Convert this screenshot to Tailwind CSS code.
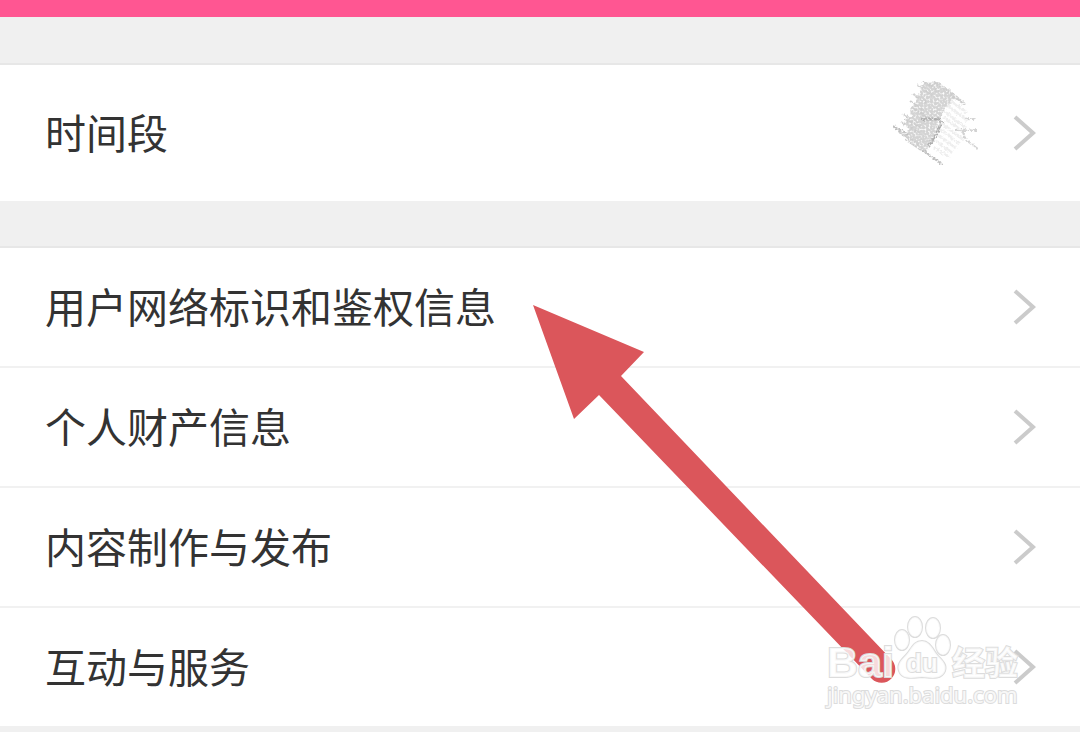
<!DOCTYPE html>
<html lang="zh-CN">
<head>
  <meta charset="UTF-8">
  <meta name="viewport" content="width=device-width, initial-scale=1.0">
  <title>个人信息收集清单</title>
  <script src="https://cdn.jsdelivr.net/npm/@tailwindcss/browser@4"></script>
</head>
<body class="min-h-screen bg-[#f0f0f0] font-['Noto_Sans_CJK_SC',sans-serif] text-[41px] leading-[60px] text-[#333333] overflow-hidden">
  <div class="relative">
    <header class="h-[17px] bg-[#ff5692]"></header>

    <main class="pt-[46px]">
      <!-- 时间段 -->
      <section class="border-t-2 border-[#e7e7e7] bg-white">
        <a href="#" class="flex h-[136px] items-center justify-between pl-[45px] pr-11">
          <span class="pb-1">时间段</span>
          <span class="flex items-center gap-6">
            <svg class="h-[110px] w-[100px]" viewBox="0 0 100 110" fill="none" aria-hidden="true">
              <defs>
                <filter id="grain" x="0" y="0" width="100%" height="100%">
                  <feTurbulence type="fractalNoise" baseFrequency="0.5" numOctaves="2" seed="4" result="noise"/>
                  <feDisplacementMap in="SourceGraphic" in2="noise" scale="4" xChannelSelector="R" yChannelSelector="G" result="rough"/>
                  <feColorMatrix in="noise" type="matrix" values="0 0 0 0 0  0 0 0 0 0  0 0 0 0 0  0 0 3 0 -0.6" result="holes"/>
                  <feComposite in="rough" in2="holes" operator="in"/>
                </filter>
              </defs>
              <g filter="url(#grain)" transform="translate(3 -1)">
                <path d="M33 6l14-1 12 8 6 8-9 8-8 14-4 14-9 18-12-8-10-8 5-8-5-6 7-5-1-8 5-7z" fill="#d3d3d3"/>
                <path d="M26 8l16 10M32 4l16 10M42 4l32 24M22 17l14 9M19 24l13 9M22 31l12 8M12 37l18 11M10 45l20 12M7 54l23 15M14 42l14 8M14 62l16 11M56 12l18 15" stroke="#cccccc" stroke-width="2"/>
                <path d="M2 49l15 9M30 72l22 16" stroke="#bebebe" stroke-width="2"/>
                <path d="M30 42h20M51 44l-6 14-7 11" stroke="#adadad" stroke-width="3"/>
                <path d="M60 24l16 12M57 29l20 15M53 34l22 17M52 40l20 15M50 46l23 17M49 52l20 15M47 58l18 13M45 64l16 12M43 70l15 10" stroke="#eeeeee" stroke-width="3"/>
                <path d="M74 42h11M64 53h22M71 53l4 10 12 9" stroke="#d2d2d2" stroke-width="2"/>
              </g>
            </svg>
            <svg class="h-9 w-6" viewBox="0 0 24 36" fill="none" stroke="#cbcbcb" stroke-width="4" aria-hidden="true"><path d="M3 2l18 16L3 34"/></svg>
          </span>
        </a>
      </section>

      <!-- 信息分类 -->
      <nav class="mt-[45px] border-t-2 border-[#e7e7e7] bg-white divide-y-2 divide-[#f1f1f1]">
        <a href="#" class="flex h-[120px] items-center justify-between pl-[45px] pr-11">
          <span class="pb-1">用户网络标识和鉴权信息</span>
          <svg class="h-9 w-6" viewBox="0 0 24 36" fill="none" stroke="#cbcbcb" stroke-width="4" aria-hidden="true"><path d="M3 2l18 16L3 34"/></svg>
        </a>
        <a href="#" class="flex h-[120px] items-center justify-between pl-[45px] pr-11">
          <span class="pb-1">个人财产信息</span>
          <svg class="h-9 w-6" viewBox="0 0 24 36" fill="none" stroke="#cbcbcb" stroke-width="4" aria-hidden="true"><path d="M3 2l18 16L3 34"/></svg>
        </a>
        <a href="#" class="flex h-[120px] items-center justify-between pl-[45px] pr-11">
          <span class="pb-1">内容制作与发布</span>
          <svg class="h-9 w-6" viewBox="0 0 24 36" fill="none" stroke="#cbcbcb" stroke-width="4" aria-hidden="true"><path d="M3 2l18 16L3 34"/></svg>
        </a>
        <a href="#" class="flex h-[118px] items-center justify-between pl-[45px] pr-11">
          <span class="pb-1">互动与服务</span>
          <svg class="h-9 w-6" viewBox="0 0 24 36" fill="none" stroke="#cbcbcb" stroke-width="4" aria-hidden="true"><path d="M3 2l18 16L3 34"/></svg>
        </a>
      </nav>
    </main>

    <!-- 指示箭头 -->
    <svg class="pointer-events-none absolute left-[532px] top-[304px] h-[384px] w-[368px]" viewBox="0 0 368 384" aria-hidden="true">
      <path d="M1 1L112 48L89 72L359 355A13 13 0 0 1 340 375L67 91L42 115Z" fill="#db565b"/>
    </svg>

    <!-- 水印 -->
    <svg class="pointer-events-none absolute right-[54px] top-[612px] h-[104px] w-[204px]" viewBox="0 0 204 104" fill="#ffffff" fill-opacity="0.8" stroke="#dcdcdc" stroke-width="2" paint-order="stroke" role="img" aria-label="Baidu 经验">
      <text x="5" y="65" font-family="Liberation Sans, sans-serif" font-weight="700" font-size="43">Bai</text>
      <ellipse cx="80" cy="28" rx="7" ry="10"/>
      <ellipse cx="93" cy="15" rx="7" ry="10"/>
      <ellipse cx="111" cy="16" rx="7" ry="10"/>
      <ellipse cx="121" cy="33" rx="7" ry="10"/>
      <path d="M100 29c-9 0-11 9-16 14-6 6-9 10-7 16 3 9 13 7 23 6 10 1 19 3 23-6 2-6-2-10-7-15-5-6-8-15-16-15z"/>
      <text x="84" y="60" font-family="Liberation Sans, sans-serif" font-weight="700" font-size="26">du</text>
      <text x="130" y="63" font-family="Noto Sans CJK SC, sans-serif" font-weight="700" font-size="33">经验</text>
      <text x="5" y="91" font-family="Noto Sans, sans-serif" font-size="22">jingyan.baidu.com</text>
    </svg>
  </div>
</body>
</html>
